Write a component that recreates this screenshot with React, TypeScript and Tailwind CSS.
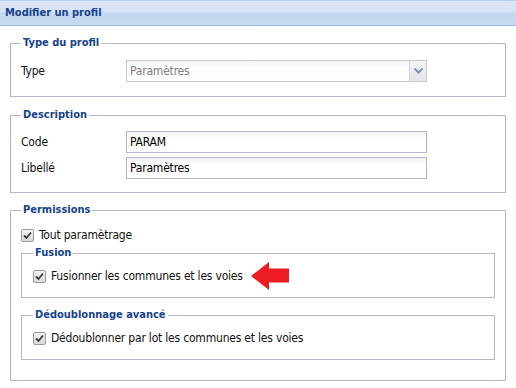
import React from "react";

const font = { fontFamily: '"DejaVu Sans Condensed", "DejaVu Sans", Tahoma, sans-serif' };

function Check() {
  return (
    <span className="inline-flex h-[13px] w-[13px] shrink-0 items-center justify-center rounded-[2px] border border-[#9a9a9a] bg-[linear-gradient(#f4f4f4,#d9d9d9)]">
      <svg width="9" height="9" viewBox="0 0 9 9">
        <path d="M1 4.5 L3.5 7 L8 1.5" fill="none" stroke="#3a3a3a" strokeWidth="1.8" />
      </svg>
    </span>
  );
}

function Legend({ children }: { children: React.ReactNode }) {
  return (
    <legend className="px-[2px] text-[11px] font-bold leading-[14px] text-[#15428b]">{children}</legend>
  );
}

const inputCls =
  "h-[22px] w-[301px] border border-[#b5b8c8] bg-[linear-gradient(#eef0f2_0px,#ffffff_6px,#ffffff)] pl-[3px] text-[12px] tracking-[-0.2px] leading-[20px] text-black flex items-center";

export default function App() {
  return (
    <div className="h-[388px] w-[516px] overflow-hidden bg-white" style={font}>
      <div className="flex h-[26px] items-center border-t border-b border-t-[#b7cdea] border-b-[#99bbe8] bg-[linear-gradient(#dde8f6_0%,#d4e2f4_45%,#c4d7f0_50%,#c7d9f1_100%)] pl-[5px] text-[11px] font-bold text-[#15428b]">
        Modifier un profil
      </div>

      <fieldset className="mx-[10px] mt-[10px] border border-[#b5b8c8] px-[10px] pt-[10px] pb-[14px]">
        <Legend>Type du profil</Legend>
        <div className="flex items-center">
          <span className="w-[105px] text-[12px] tracking-[-0.2px] text-[#111]">Type</span>
          <div className="flex h-[22px] w-[301px] border border-[#c8c8d0]">
            <div className="flex flex-1 items-center bg-[linear-gradient(#f2f4f5_0px,#fdfdfd_6px,#fdfdfd)] pl-[3px] text-[12px] tracking-[-0.2px] text-[#808080]">
              Paramètres
            </div>
            <div className="flex w-[17px] items-center justify-center border-l border-[#d4d4d8] bg-[linear-gradient(#f4f4f4,#e4e4e6)]">
              <svg width="9" height="6" viewBox="0 0 9 6">
                <path d="M0.5 0.5 L4.5 4.5 L8.5 0.5" fill="none" stroke="#7f93b5" strokeWidth="2" />
              </svg>
            </div>
          </div>
        </div>
      </fieldset>

      <fieldset className="mx-[10px] mt-[11px] border border-[#b5b8c8] px-[10px] pt-[9px] pb-[13px]">
        <Legend>Description</Legend>
        <div className="flex flex-col gap-[4px]">
          <div className="flex items-center">
            <span className="w-[105px] text-[12px] tracking-[-0.2px] text-[#111]">Code</span>
            <div className={inputCls}>PARAM</div>
          </div>
          <div className="flex items-center">
            <span className="w-[105px] text-[12px] tracking-[-0.2px] text-[#111]">Libellé</span>
            <div className={inputCls}>Paramètres</div>
          </div>
        </div>
      </fieldset>

      <fieldset className="mx-[10px] mt-[10px] border border-[#b5b8c8] px-[10px] pt-[9px] pb-[20px]">
        <Legend>Permissions</Legend>
        <div className="flex h-[18px] items-center gap-[5px] text-[12px] tracking-[-0.2px] text-[#111]">
          <Check />
          <span>Tout paramètrage</span>
        </div>
        <fieldset className="mt-[2px] border border-[#b5b8c8] px-[11px] pt-[7px] pb-[12px]">
          <Legend>Fusion</Legend>
          <div className="flex h-[18px] items-center gap-[5px] text-[12px] tracking-[-0.2px] text-[#111]">
            <Check />
            <span>Fusionner les communes et les voies</span>
            <svg width="39" height="28" viewBox="0 0 39 28" className="-my-[5px] ml-[3px]">
              <polygon points="0,14 18,0 18,6.5 38,6.5 38,20.5 18,20.5 18,28" fill="#ed1c24" />
            </svg>
          </div>
        </fieldset>
        <fieldset className="mt-[10px] border border-[#b5b8c8] px-[11px] pt-[7px] pb-[12px]">
          <Legend>Dédoublonnage avancé</Legend>
          <div className="flex h-[18px] items-center gap-[5px] text-[12px] tracking-[-0.2px] text-[#111]">
            <Check />
            <span>Dédoublonner par lot les communes et les voies</span>
          </div>
        </fieldset>
      </fieldset>
    </div>
  );
}
